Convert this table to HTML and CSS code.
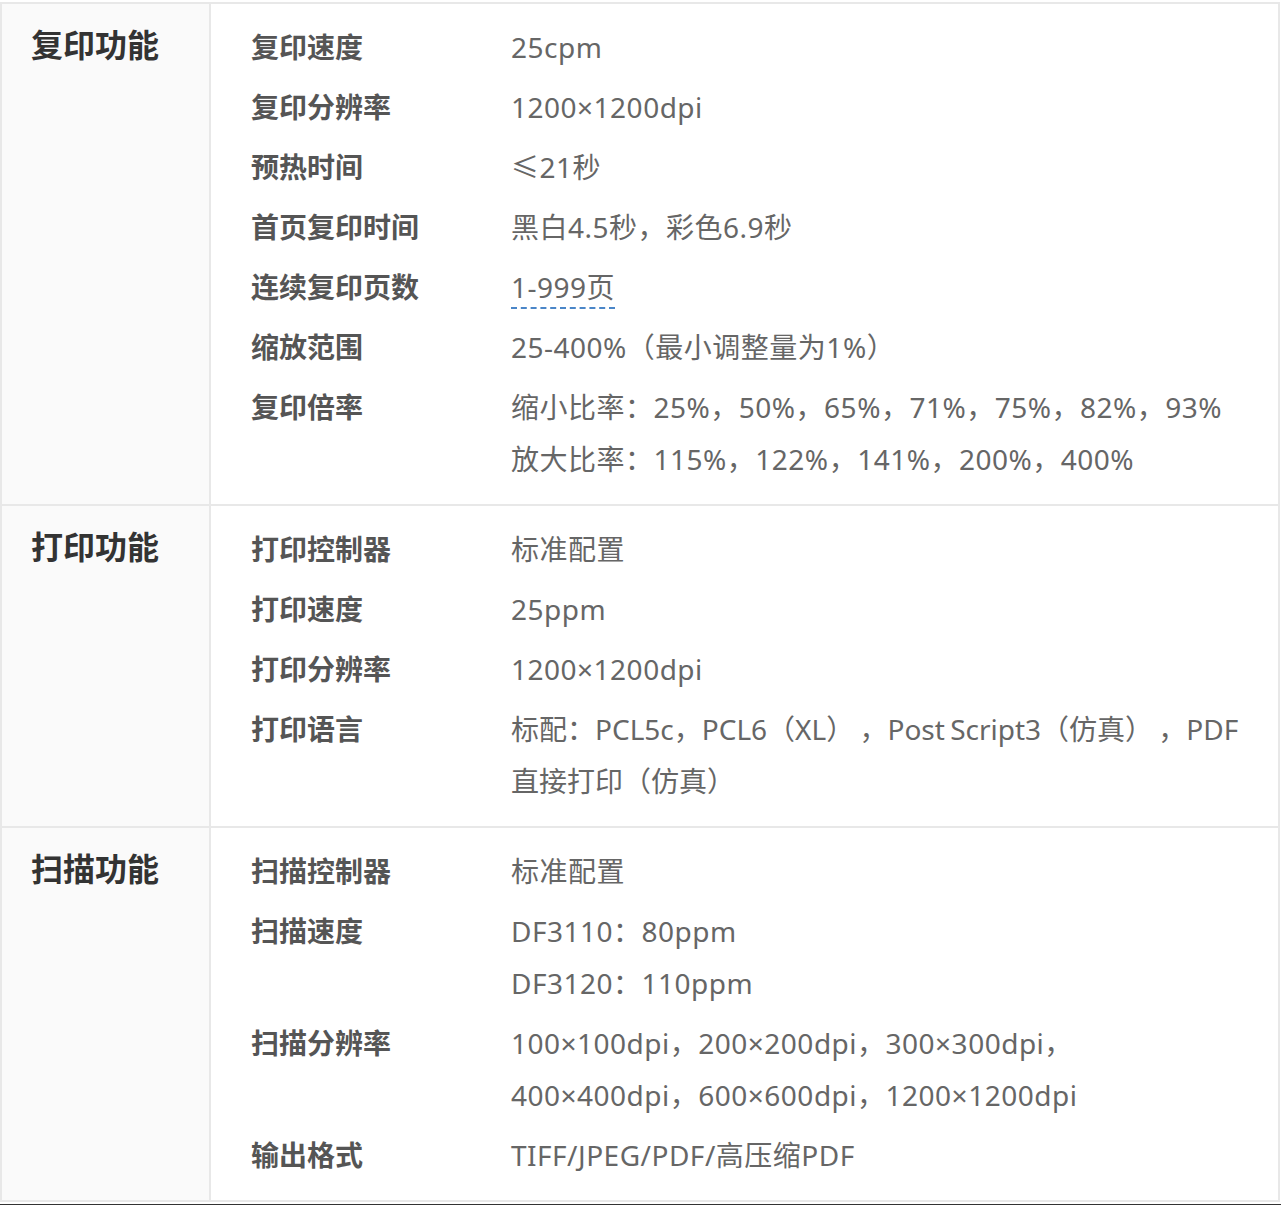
FILE: index.html
```html
<!DOCTYPE html>
<html lang="zh-CN">
<head>
<meta charset="utf-8">
<title>规格参数</title>
<link rel="stylesheet" href="styles.css">
</head>
<body>
<div class="spec">
  <div class="section">
    <div class="sec-title">复印功能</div>
    <div class="sec-body">
      <div class="item"><div class="label">复印速度</div><div class="value">25cpm</div></div>
      <div class="item"><div class="label">复印分辨率</div><div class="value">1200×1200dpi</div></div>
      <div class="item"><div class="label">预热时间</div><div class="value">≤21秒</div></div>
      <div class="item"><div class="label">首页复印时间</div><div class="value">黑白4.5秒，彩色6.9秒</div></div>
      <div class="item"><div class="label">连续复印页数</div><div class="value"><span class="dashed">1-999页</span></div></div>
      <div class="item"><div class="label">缩放范围</div><div class="value">25-400%（最小调整量为1%）</div></div>
      <div class="item"><div class="label">复印倍率</div><div class="value">缩小比率：25%，50%，65%，71%，75%，82%，93%<br>放大比率：115%，122%，141%，200%，400%</div></div>
    </div>
  </div>
  <div class="section">
    <div class="sec-title">打印功能</div>
    <div class="sec-body">
      <div class="item"><div class="label">打印控制器</div><div class="value">标准配置</div></div>
      <div class="item"><div class="label">打印速度</div><div class="value">25ppm</div></div>
      <div class="item"><div class="label">打印分辨率</div><div class="value">1200×1200dpi</div></div>
      <div class="item"><div class="label">打印语言</div><div class="value compact">标配：PCL5c，PCL6（XL） ，Post Script3（仿真） ，PDF<br>直接打印（仿真）</div></div>
    </div>
  </div>
  <div class="section">
    <div class="sec-title">扫描功能</div>
    <div class="sec-body">
      <div class="item"><div class="label">扫描控制器</div><div class="value">标准配置</div></div>
      <div class="item"><div class="label">扫描速度</div><div class="value">DF3110：80ppm<br>DF3120：110ppm</div></div>
      <div class="item"><div class="label">扫描分辨率</div><div class="value">100×100dpi，200×200dpi，300×300dpi，<br>400×400dpi，600×600dpi，1200×1200dpi</div></div>
      <div class="item"><div class="label">输出格式</div><div class="value">TIFF/JPEG/PDF/高压缩PDF</div></div>
    </div>
  </div>
</div>
<div class="foot-line"></div>
</body>
</html>
```
FILE: styles.css
```css
html, body {
  margin: 0;
  padding: 0;
  background: #fff;
}
body {
  padding-top: 2px;
  font-family: "Noto Sans", "Noto Sans CJK SC", sans-serif;
}
.spec {
  width: 1280px;
  border-top: 2px solid #e8e8e8;
}
.section {
  display: grid;
  grid-template-columns: 211px 1fr;
  border-bottom: 2px solid #e8e8e8;
}
.sec-title {
  background: #fafafa;
  border-left: 2px solid #e8e8e8;
  border-right: 2px solid #e8e8e8;
  padding: 21px 0 0 29px;
  font-size: 32px;
  font-weight: 700;
  color: #333;
  line-height: 40px;
}
.sec-body {
  border-right: 2px solid #e8e8e8;
  padding: 17px 16px 19px 40px;
}
.item {
  display: grid;
  grid-template-columns: 260px 1fr;
  line-height: 52px;
  margin-bottom: 8px;
}
.item:last-child {
  margin-bottom: 0;
}
.label {
  font-size: 28px;
  font-weight: 700;
  color: #555;
}
.value {
  font-size: 28px;
  color: #666;
  letter-spacing: 0.5px;
  white-space: nowrap;
}
.value.compact {
  letter-spacing: 0;
  word-spacing: -2px;
}
.dashed {
  border-bottom: 2px dashed #4a86c8;
  padding-bottom: 1px;
}
.foot-line {
  margin-top: 2px;
  height: 2px;
  width: 1281px;
  background: #333;
}
```
